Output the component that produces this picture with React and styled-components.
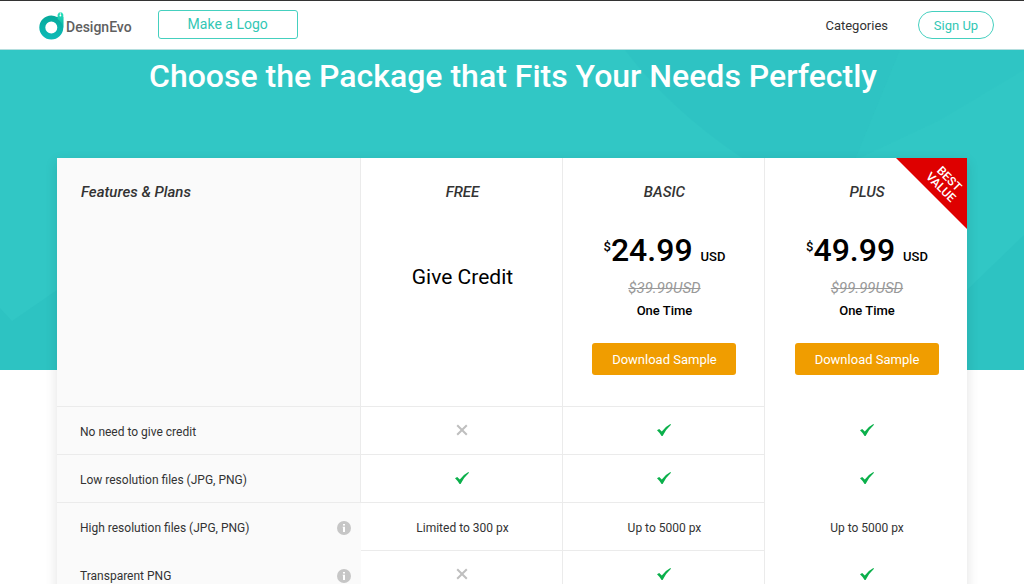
// App.jsx
import React from 'react';
import styled, { createGlobalStyle } from 'styled-components';

const plans = [
  { id: 'free', name: 'FREE', credit: 'Give Credit' },
  { id: 'basic', name: 'BASIC', price: '24.99', oldPrice: '$39.99USD' },
  { id: 'plus', name: 'PLUS', price: '49.99', oldPrice: '$99.99USD', best: true },
];

const features = [
  { name: 'No need to give credit', values: [false, true, true] },
  { name: 'Low resolution files (JPG, PNG)', values: [true, true, true] },
  {
    name: 'High resolution files (JPG, PNG)',
    values: ['Limited to 300 px', 'Up to 5000 px', 'Up to 5000 px'],
    info: true
  },
  { name: 'Transparent PNG', values: [false, true, true], info: true },
];

const LogoMark = () => (
  <svg width="25" height="30" viewBox="0 0 25 30" aria-hidden="true">
    <defs>
      <linearGradient id="ring" x1="0" y1="0" x2="0" y2="1">
        <stop offset="0" stopColor="#06a99b" />
        <stop offset="1" stopColor="#0dbbb8" />
      </linearGradient>
      <linearGradient id="stem" x1="0" y1="0" x2="0" y2="1">
        <stop offset="0" stopColor="#27e2bb" />
        <stop offset="1" stopColor="#06b0a4" />
      </linearGradient>
    </defs>
    <path
      d="M12.3 5.5 A12 12 0 1 0 24.3 17.5 V7 H18 Q15.5 5.5 12.3 5.5 Z M12.3 11.5 A6 6 0 1 1 12.3 23.5 A6 6 0 1 1 12.3 11.5 Z"
      fill="url(#ring)"
      fillRule="evenodd"
    />
    <path d="M18.6 9 V4.5 L20 2.6 H23 L24.3 4.5 V18 Q23 12 18.6 9 Z" fill="url(#stem)" />
    <path d="M21.4 3 V5" stroke="#fff" strokeWidth="0.7" />
    <circle cx="21.4" cy="5.6" r="0.9" fill="#fff" />
  </svg>
);

const Check = () => (
  <svg width="14" height="12" viewBox="0 0 14 12" role="img" aria-label="Included">
    <path d="M0 6.2 L2.2 4.9 L4.8 7.4 Q8.5 2.5 13.4 0 L14 0.8 Q9.2 5 5.6 12 L4.6 12 Q2.6 8.6 0 6.2 Z" fill="#0bb04b" />
  </svg>
);

const Cross = () => (
  <svg width="12" height="12" viewBox="0 0 12 12" role="img" aria-label="Not included">
    <path d="M1.2 1.2 L10.8 10.8 M10.8 1.2 L1.2 10.8" stroke="#bfbfbf" strokeWidth="2" />
  </svg>
);

const InfoIcon = () => (
  <svg width="14" height="14" viewBox="0 0 14 14" aria-hidden="true">
    <circle cx="7" cy="7" r="7" fill="#c6c6c6" />
    <path d="M6 3 H8 V4.6 H6 Z M5.6 5.8 H8 V11 H6 V6.6 H5.6 Z" fill="#fff" />
  </svg>
);

const Value = ({ value }) => {
  if (value === true) return <Check />;
  if (value === false) return <Cross />;
  return value;
};

const App = () => (
  <>
    <GlobalStyle />
    <Header>
      <Logo href="#home">
        <LogoMark />
        <LogoText>DesignEvo</LogoText>
      </Logo>
      <MakeButton>Make a Logo</MakeButton>
      <Nav>
        <NavLink href="#categories">Categories</NavLink>
        <SignUpButton>Sign Up</SignUpButton>
      </Nav>
    </Header>
    <Hero>
      <HeroShapes viewBox="0 0 1024 320" preserveAspectRatio="none" aria-hidden="true">
        <path d="M625 0 Q670 60 745 110 H855 L900 0 Z" fill="#2ec2c2" opacity="0.7" />
        <path d="M900 0 H1024 V20 L940 70 L855 110 Z" fill="#2fc4c3" opacity="0.7" />
        <path d="M0 258 L12 271 L57 240 V320 H0 Z" fill="#2bbfc0" opacity="0.6" />
        <path d="M967 240 L1024 185 V320 H967 Z" fill="#2bbfc0" opacity="0.6" />
      </HeroShapes>
      <Title>Choose the Package that Fits Your Needs Perfectly</Title>
    </Hero>
    <Main>
      <Card>
        <Table>
          <thead>
            <tr>
              <FeatureHead scope="col">Features &amp; Plans</FeatureHead>
              {plans.map((plan) => (
                <PlanHead key={plan.id} scope="col" $last={plan.best}>
                  {plan.best && <Ribbon><RibbonText>BEST<br />VALUE</RibbonText></Ribbon>}
                  <PlanName>{plan.name}</PlanName>
                  {plan.credit && <Credit>{plan.credit}</Credit>}
                  {plan.price && (
                    <>
                      <Price><Currency>$</Currency>{plan.price} <Unit>USD</Unit></Price>
                      <OldPrice>{plan.oldPrice}</OldPrice>
                      <Term>One Time</Term>
                      <SampleButton>Download Sample</SampleButton>
                    </>
                  )}
                </PlanHead>
              ))}
            </tr>
          </thead>
          <tbody>
            {features.map((feature) => (
              <tr key={feature.name}>
                <FeatureCell scope="row" $plain={feature.info}>
                  <FeatureRow>
                    {feature.name}
                    {feature.info && (
                      <InfoButton aria-label={'About ' + feature.name}><InfoIcon /></InfoButton>
                    )}
                  </FeatureRow>
                </FeatureCell>
                {feature.values.map((value, index) => (
                  <ValueCell key={index} $last={index === 2}>
                    <ValueBox $icon={typeof value === 'boolean'}><Value value={value} /></ValueBox>
                  </ValueCell>
                ))}
              </tr>
            ))}
          </tbody>
        </Table>
      </Card>
    </Main>
  </>
);

export default App;

const GlobalStyle = createGlobalStyle`
  * {
    box-sizing: border-box;
  }

  body {
    margin: 0;
    background-color: #fff;
    color: #333;
    font-family: Roboto, "Liberation Sans", sans-serif;
    font-size: 12px;
  }

  button {
    padding: 0;
    font-family: inherit;
    cursor: pointer;
  }

  svg {
    display: block;
  }
`;

const Header = styled.header`
  display: flex;
  align-items: center;
  height: 50px;
  padding: 0 30px 0 39px;
  border-top: 1px solid #333;
  border-bottom: 1px solid #b4dede;
  background-color: #fff;
`;

const Logo = styled.a`
  display: flex;
  align-items: center;
  gap: 2px;
  text-decoration: none;
`;

const LogoText = styled.span`
  padding-top: 4px;
  color: #606060;
  font-size: 14px;
  font-weight: 500;
`;

const MakeButton = styled.button`
  width: 140px;
  height: 29px;
  margin: 0 0 2px 26px;
  border: 1px solid #45d0bf;
  border-radius: 3px;
  background-color: #fff;
  color: #33c7b5;
  font-size: 14px;
`;

const Nav = styled.nav`
  display: flex;
  align-items: center;
  gap: 30px;
  margin-left: auto;
`;

const NavLink = styled.a`
  color: #333;
  font-size: 13px;
  text-decoration: none;
`;

const SignUpButton = styled.button`
  width: 76px;
  height: 28px;
  border: 1px solid #45d0bf;
  border-radius: 14px;
  background-color: #fff;
  color: #33c7b5;
  font-size: 13px;
`;

const Hero = styled.section`
  position: relative;
  height: 320px;
  background-color: #31c7c5;
`;

const HeroShapes = styled.svg`
  position: absolute;
  inset: 0;
  width: 100%;
  height: 100%;
`;

const Title = styled.h1`
  position: relative;
  margin: 0;
  padding: 6px 0 0 2px;
  color: #fff;
  font-size: 32px;
  font-weight: 500;
  line-height: 40px;
  text-align: center;
`;

const Main = styled.main`
  position: relative;
  margin-top: -212px;
  padding: 0 57px;
`;

const Card = styled.div`
  background-color: #fff;
  box-shadow: 0 4px 12px rgba(0, 0, 0, 0.12);
`;

const Table = styled.table`
  width: 100%;
  border-spacing: 0;
  table-layout: fixed;
`;

const FeatureHead = styled.th`
  width: 33.4%;
  height: 249px;
  padding: 24px;
  border-right: 1px solid #ebebeb;
  border-bottom: 1px solid #ebebeb;
  background-color: #fafafa;
  font-size: 15px;
  font-style: italic;
  font-weight: 500;
  line-height: 20px;
  text-align: left;
  vertical-align: top;
`;

const PlanHead = styled.th`
  position: relative;
  padding: 24px 0 0 2px;
  border-right: ${({ $last }) => ($last ? 'none' : '1px solid #ebebeb')};
  border-bottom: 1px solid ${({ $last }) => ($last ? 'transparent' : '#ebebeb')};
  color: #000;
  font-weight: 500;
  vertical-align: top;
`;

const PlanName = styled.div`
  color: #333;
  font-size: 15px;
  font-style: italic;
  line-height: 20px;
`;

const Credit = styled.div`
  margin-top: 60px;
  font-size: 21px;
  font-weight: 400;
  line-height: 30px;
`;

const Price = styled.div`
  margin-top: 28px;
  font-size: 32px;
  line-height: 40px;
`;

const Currency = styled.sup`
  font-size: 13px;
  line-height: 1;
  vertical-align: 10px;
`;

const Unit = styled.span`
  font-size: 13px;
`;

const OldPrice = styled.del`
  display: block;
  margin-top: 1px;
  color: #999;
  font-size: 15px;
  font-style: italic;
  font-weight: 400;
  line-height: 20px;
`;

const Term = styled.div`
  margin-top: 3px;
  font-size: 13px;
  line-height: 20px;
`;

const SampleButton = styled.button`
  width: 144px;
  height: 32px;
  margin-top: 22px;
  border: none;
  border-radius: 3px;
  background-color: #f09d00;
  color: #fff;
  font-size: 13px;
`;

const Ribbon = styled.div`
  position: absolute;
  top: 0;
  right: 0;
  width: 71px;
  height: 71px;
  background-color: #de0000;
  clip-path: polygon(0 0, 100% 0, 100% 100%);
`;

const RibbonText = styled.div`
  position: absolute;
  top: 13px;
  right: 0;
  width: 44px;
  color: #fff;
  font-size: 12px;
  line-height: 12px;
  transform: rotate(45deg);
`;

const FeatureCell = styled.th`
  height: 48px;
  padding: 2px 10px 0 23px;
  border-right: ${({ $plain }) => ($plain ? 'none' : '1px solid #ebebeb')};
  border-bottom: 1px solid ${({ $plain }) => ($plain ? 'transparent' : '#ebebeb')};
  background-color: #fafafa;
  font-weight: 400;
  text-align: left;
`;

const FeatureRow = styled.div`
  display: flex;
  align-items: center;
  justify-content: space-between;
`;

const InfoButton = styled.button`
  border: none;
  background: none;
`;

const ValueCell = styled.td`
  height: 48px;
  padding: 2px 0 0 2px;
  border-right: ${({ $last }) => ($last ? 'none' : '1px solid #ebebeb')};
  border-bottom: 1px solid ${({ $last }) => ($last ? 'transparent' : '#ebebeb')};
`;

const ValueBox = styled.div`
  display: flex;
  justify-content: center;
  padding-bottom: ${({ $icon }) => ($icon ? '4px' : '0')};
`;
